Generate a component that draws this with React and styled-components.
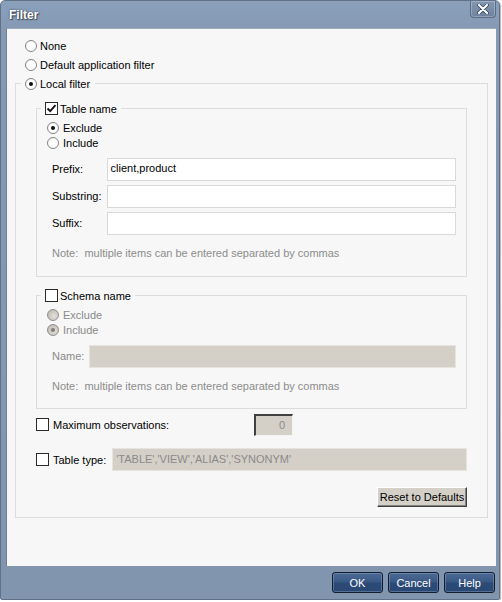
import styled, { createGlobalStyle } from "styled-components";

const GlobalStyle = createGlobalStyle`
  html, body {
    margin: 0;
    padding: 0;
    background: #ffffff;
  }
  body {
    font-family: "Liberation Sans", Arial, sans-serif;
    font-size: 11px;
    color: #000;
  }
`;

const Window = styled.div`
  width: 500px;
  height: 600px;
  box-sizing: border-box;
  display: flex;
  flex-direction: column;
  background: linear-gradient(180deg, #8aa0bb 0, #8599b4 28px, #8195ae 100%);
  border: 1px solid #617187;
  border-radius: 5px 5px 2px 2px;
  box-shadow: 1px 1px 1px rgba(0, 0, 0, 0.3);
`;

const TitleBar = styled.div`
  height: 27px;
  display: flex;
  align-items: flex-start;
  padding-left: 8px;
`;

const Title = styled.div`
  margin-top: 7px;
  font-size: 12px;
  font-weight: bold;
  color: #fff;
  text-shadow: 0 0 2px #2a3648, 1px 1px 1px rgba(0, 0, 0, 0.5);
`;

const CloseButton = styled.div`
  margin-left: auto;
  margin-right: 3px;
  width: 26px;
  height: 17px;
  box-sizing: border-box;
  display: flex;
  align-items: center;
  justify-content: center;
  border: 1px solid #5b6c84;
  border-top: none;
  border-radius: 0 0 4px 4px;
  background: linear-gradient(180deg, #8497b2, #6e829e);
  box-shadow: inset 0 0 0 1px rgba(255, 255, 255, 0.25);
`;

const Client = styled.div`
  flex: 1;
  margin: 0 3px 0 5px;
  padding: 7px 0 0 0;
  background: #f7f7f7;
  border-left: 1px solid #6f7f95;
  border-top: 1px solid #9eabbd;
`;

const Row = styled.label`
  display: flex;
  align-items: center;
  gap: ${(p) => p.$gap || 3}px;
  height: ${(p) => p.$h || 19}px;
  margin-left: ${(p) => p.$indent || 0}px;
  color: ${(p) => (p.$disabled ? "#8a8a8a" : "#000")};
`;

const RadioCircle = styled.span`
  width: 12px;
  height: 12px;
  box-sizing: border-box;
  border-radius: 50%;
  border: 1px solid ${(p) => (p.$disabled ? "#8f8f8f" : "#858585")};
  background: ${(p) =>
    p.$disabled
      ? "radial-gradient(circle at 62% 62%, #e4e1da 0, #c4c0b8 70%, #a8a49c 100%)"
      : "radial-gradient(circle at 60% 60%, #ffffff 0, #ffffff 55%, #e2e2e2 100%)"};
  display: flex;
  align-items: center;
  justify-content: center;
  flex-shrink: 0;
  &::after {
    content: "";
    display: ${(p) => (p.$checked ? "block" : "none")};
    width: 4px;
    height: 4px;
    border-radius: 50%;
    background: ${(p) => (p.$disabled ? "#7d7d7d" : "#111")};
  }
`;

const CheckBox = styled.span`
  width: 13px;
  height: 13px;
  box-sizing: border-box;
  border: 1px solid #2a2a2a;
  background: #fff;
  display: flex;
  align-items: center;
  justify-content: center;
  flex-shrink: 0;
`;

const Group = styled.fieldset`
  margin: ${(p) => p.$mt || 0}px ${(p) => p.$mx || 0}px 0;
  padding: ${(p) => p.$pad};
  border: 1px solid #dcdcdc;
  min-width: 0;
`;

const Legend = styled.legend`
  padding: 0 ${(p) => p.$pr || 4}px 0 4px;
  margin-left: ${(p) => p.$ml}px;
`;

const FieldGrid = styled.div`
  display: grid;
  grid-template-columns: auto 1fr;
  column-gap: 5px;
  row-gap: 4px;
  margin-top: 8px;
  align-items: center;
`;

const FieldLabel = styled.div`
  color: ${(p) => (p.$disabled ? "#8a8a8a" : "#000")};
  margin-top: -2px;
`;

const TextBox = styled.div`
  height: 23px;
  box-sizing: border-box;
  border: 1px solid ${(p) => (p.$disabled ? "#e6e4df" : "#d9d9d9")};
  background: ${(p) => (p.$disabled ? "#d4d0c8" : "#fff")};
  padding: 2px 3px 0;
  line-height: 14px;
  white-space: nowrap;
`;

const Note = styled.div`
  margin-top: ${(p) => p.$mt}px;
  line-height: 14px;
  color: #8c8c8c;
  white-space: pre;
`;

const OptionRow = styled.div`
  display: flex;
  align-items: center;
  height: 23px;
  margin-top: ${(p) => p.$mt}px;
`;

const OptionLabel = styled.label`
  display: flex;
  align-items: center;
  gap: 4px;
  width: ${(p) => (p.$w ? `${p.$w}px` : "auto")};
  margin-right: ${(p) => p.$mr || 0}px;
  flex-shrink: 0;
`;

const SunkenBox = styled.div`
  width: 39px;
  height: 22px;
  box-sizing: border-box;
  background: #d4d0c8;
  border-top: 2px solid #404040;
  border-left: 2px solid #404040;
  border-right: 1px solid #f4f4f4;
  border-bottom: 1px solid #f4f4f4;
  color: #8a8a8a;
  text-align: right;
  padding-right: 7px;
  line-height: 18px;
`;

const FlatBox = styled.div`
  flex: 1;
  height: 23px;
  box-sizing: border-box;
  background: #d4d0c8;
  border: 1px solid #e6e4df;
  color: #8a8a8a;
  padding: 0 3px;
  line-height: 20px;
  white-space: nowrap;
`;

const ResetRow = styled.div`
  display: flex;
  justify-content: flex-end;
  margin-top: 16px;
`;

const ClassicButton = styled.button`
  width: 90px;
  height: 20px;
  box-sizing: border-box;
  padding: 0;
  font: inherit;
  color: #000;
  background: #d4d0c8;
  border-top: 1px solid #ffffff;
  border-left: 1px solid #ffffff;
  border-right: 1px solid #404040;
  border-bottom: 1px solid #404040;
  box-shadow: inset -1px -1px 0 #808080;
`;

const ButtonBar = styled.div`
  height: 33px;
  display: flex;
  justify-content: flex-end;
  align-items: flex-start;
  gap: 5px;
  padding: 6px 4px 0 0;
  box-sizing: border-box;
`;

const DialogButton = styled.button`
  width: 51px;
  height: 21px;
  box-sizing: border-box;
  padding: 0;
  font: inherit;
  color: #fff;
  border: 1px solid #141d2b;
  border-radius: 3px;
  background: linear-gradient(180deg, #4d6a94 0, #3a5a86 45%, #2b4a76 55%, #2a4872 100%);
  box-shadow: inset 0 0 0 1px rgba(160, 185, 220, 0.35);
`;

const Check = () => (
  <svg width="11" height="11" viewBox="0 0 11 11">
    <path d="M1.5 5.5 L4.2 8.2 L9.5 2.2" fill="none" stroke="#111" strokeWidth="1.8" />
  </svg>
);

const Radio = ({ checked, disabled }) => (
  <RadioCircle $checked={checked} $disabled={disabled} />
);

const Box = ({ checked }) => <CheckBox>{checked && <Check />}</CheckBox>;

export default function App() {
  return (
    <>
      <GlobalStyle />
      <Window>
        <TitleBar>
          <Title>Filter</Title>
          <CloseButton>
            <svg width="12" height="10" viewBox="0 0 12 10">
              <path d="M2 1 L10 9 M10 1 L2 9" stroke="#2d3c52" strokeWidth="3.6" strokeLinecap="round" />
              <path d="M2 1 L10 9 M10 1 L2 9" stroke="#fff" strokeWidth="2.2" strokeLinecap="round" />
            </svg>
          </CloseButton>
        </TitleBar>

        <Client>
          <Row $indent={18}>
            <Radio />
            None
          </Row>
          <Row $indent={18}>
            <Radio />
            Default application filter
          </Row>

          <Group $mx={8} $pad="0 20px 10px">
            <Legend $ml={-15} $pr={5}>
              <Row>
                <Radio checked />
                Local filter
              </Row>
            </Legend>

            <Group $mt={6} $pad="2px 10px 16px 15px">
              <Legend $ml={-11}>
                <Row $gap={2}>
                  <Box checked />
                  Table name
                </Row>
              </Legend>
              <Row $h={15} $indent={-5} $gap={4}>
                <Radio checked />
                Exclude
              </Row>
              <Row $h={15} $indent={-5} $gap={4}>
                <Radio />
                Include
              </Row>
              <FieldGrid>
                <FieldLabel>Prefix:</FieldLabel>
                <TextBox>client,product</TextBox>
                <FieldLabel>Substring:</FieldLabel>
                <TextBox />
                <FieldLabel>Suffix:</FieldLabel>
                <TextBox />
              </FieldGrid>
              <Note $mt={11}>Note:  multiple items can be entered separated by commas</Note>
            </Group>

            <Group $mt={9} $pad="2px 10px 15px 15px">
              <Legend $ml={-11}>
                <Row $gap={2}>
                  <Box />
                  Schema name
                </Row>
              </Legend>
              <Row $h={15} $indent={-5} $gap={4} $disabled>
                <Radio disabled />
                Exclude
              </Row>
              <Row $h={15} $indent={-5} $gap={4} $disabled>
                <Radio checked disabled />
                Include
              </Row>
              <FieldGrid>
                <FieldLabel $disabled>Name:</FieldLabel>
                <TextBox $disabled />
              </FieldGrid>
              <Note $mt={11}>Note:  multiple items can be entered separated by commas</Note>
            </Group>

            <OptionRow $mt={4}>
              <OptionLabel $w={218}>
                <Box />
                Maximum observations:
              </OptionLabel>
              <SunkenBox>0</SunkenBox>
            </OptionRow>

            <OptionRow $mt={12}>
              <OptionLabel $mr={6}>
                <Box />
                Table type:
              </OptionLabel>
              <FlatBox>'TABLE','VIEW','ALIAS','SYNONYM'</FlatBox>
            </OptionRow>

            <ResetRow>
              <ClassicButton>Reset to Defaults</ClassicButton>
            </ResetRow>
          </Group>
        </Client>

        <ButtonBar>
          <DialogButton>OK</DialogButton>
          <DialogButton>Cancel</DialogButton>
          <DialogButton>Help</DialogButton>
        </ButtonBar>
      </Window>
    </>
  );
}
